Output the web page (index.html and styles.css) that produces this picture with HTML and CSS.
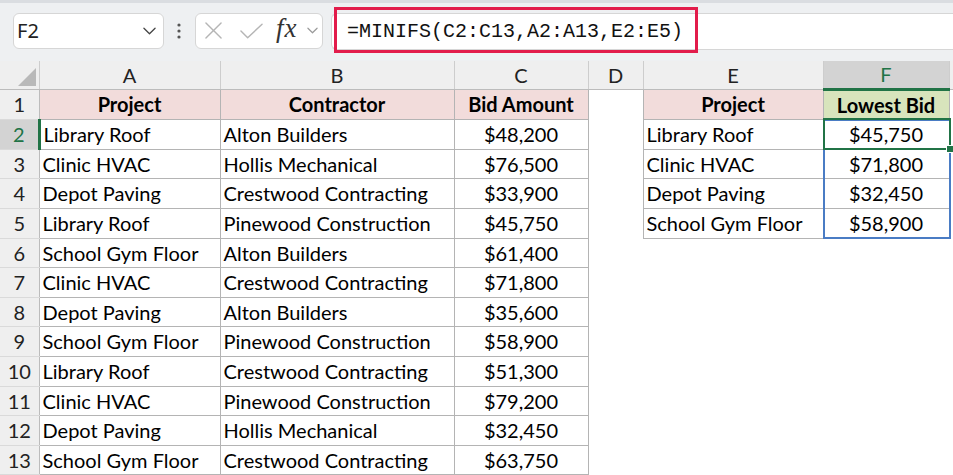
FILE: index.html
```html
<!DOCTYPE html>
<html lang="en">
<head>
  <meta charset="UTF-8" />
  <title>MINIFS – Lowest Bid</title>
  <link rel="stylesheet" href="styles.css">
</head>
<body>
  <div class="toolbar">
    <div class="namebox">
      <span>F2</span>
      <svg viewBox="0 0 14 8" fill="none" stroke="#444" stroke-width="1.4" stroke-linecap="round" stroke-linejoin="round">
        <polyline points="1 1 7 7 13 1"></polyline>
      </svg>
    </div>
    <svg class="grip" viewBox="0 0 4 16" fill="#555">
      <circle cx="2" cy="2" r="1.6"></circle>
      <circle cx="2" cy="8" r="1.6"></circle>
      <circle cx="2" cy="14" r="1.6"></circle>
    </svg>
    <div class="fx-tools">
      <svg class="tool-x" viewBox="0 0 18 18" fill="none" stroke="#b5b5b5" stroke-width="1.5" stroke-linecap="round">
        <line x1="1" y1="1" x2="17" y2="17"></line>
        <line x1="17" y1="1" x2="1" y2="17"></line>
      </svg>
      <svg class="tool-check" viewBox="0 0 24 16" fill="none" stroke="#b5b5b5" stroke-width="1.5" stroke-linecap="round" stroke-linejoin="round">
        <polyline points="1 8 8 15 23 1"></polyline>
      </svg>
      <span class="fx">fx</span>
      <svg class="tool-chevron" viewBox="0 0 12 7" fill="none" stroke="#9a9a9a" stroke-width="1.3" stroke-linecap="round" stroke-linejoin="round">
        <polyline points="1 1 6 6 11 1"></polyline>
      </svg>
    </div>
    <div class="formula">
      <span class="formula-text">=MINIFS(C2:C13,A2:A13,E2:E5)</span>
      <div class="callout"></div>
    </div>
  </div>

  <table class="sheet">
    <colgroup>
      <col class="w-head"><col class="w-a"><col class="w-b"><col class="w-c">
      <col class="w-d"><col class="w-e"><col class="w-f"><col class="w-g">
    </colgroup>
    <thead>
      <tr class="col-heads">
        <th class="corner"><div class="corner-tri"></div></th>
        <th>A</th><th>B</th><th>C</th><th>D</th><th>E</th>
        <th class="active-col">F</th><th class="last"></th>
      </tr>
    </thead>
    <tbody>
      <tr class="r30">
        <th class="rh">1</th>
        <td class="hd">Project</td><td class="hd">Contractor</td><td class="hd">Bid Amount</td>
        <td></td>
        <td class="hd">Project</td><td class="hd green">Lowest Bid</td><td></td>
      </tr>
      <tr class="r30">
        <th class="rh active-row">2</th>
        <td class="tx">Library Roof</td><td class="tx">Alton Builders</td><td class="num">$48,200</td>
        <td></td>
        <td class="tx">Library Roof</td>
        <td class="num anchor">
          <div class="spill-range"></div>
          <div class="active-cell"><span class="handle"></span></div>
          $45,750
        </td><td></td>
      </tr>
      <tr class="r29">
        <th class="rh">3</th>
        <td class="tx">Clinic HVAC</td><td class="tx">Hollis Mechanical</td><td class="num">$76,500</td>
        <td></td>
        <td class="tx">Clinic HVAC</td><td class="num">$71,800</td><td></td>
      </tr>
      <tr class="r30">
        <th class="rh">4</th>
        <td class="tx">Depot Paving</td><td class="tx">Crestwood Contracting</td><td class="num">$33,900</td>
        <td></td>
        <td class="tx">Depot Paving</td><td class="num">$32,450</td><td></td>
      </tr>
      <tr class="r30">
        <th class="rh">5</th>
        <td class="tx">Library Roof</td><td class="tx">Pinewood Construction</td><td class="num">$45,750</td>
        <td></td>
        <td class="tx">School Gym Floor</td><td class="num">$58,900</td><td></td>
      </tr>
      <tr class="r29">
        <th class="rh">6</th>
        <td class="tx">School Gym Floor</td><td class="tx">Alton Builders</td><td class="num">$61,400</td>
        <td></td><td></td><td></td><td></td>
      </tr>
      <tr class="r30">
        <th class="rh">7</th>
        <td class="tx">Clinic HVAC</td><td class="tx">Crestwood Contracting</td><td class="num">$71,800</td>
        <td></td><td></td><td></td><td></td>
      </tr>
      <tr class="r29">
        <th class="rh">8</th>
        <td class="tx">Depot Paving</td><td class="tx">Alton Builders</td><td class="num">$35,600</td>
        <td></td><td></td><td></td><td></td>
      </tr>
      <tr class="r30">
        <th class="rh">9</th>
        <td class="tx">School Gym Floor</td><td class="tx">Pinewood Construction</td><td class="num">$58,900</td>
        <td></td><td></td><td></td><td></td>
      </tr>
      <tr class="r30">
        <th class="rh">10</th>
        <td class="tx">Library Roof</td><td class="tx">Crestwood Contracting</td><td class="num">$51,300</td>
        <td></td><td></td><td></td><td></td>
      </tr>
      <tr class="r29">
        <th class="rh">11</th>
        <td class="tx">Clinic HVAC</td><td class="tx">Pinewood Construction</td><td class="num">$79,200</td>
        <td></td><td></td><td></td><td></td>
      </tr>
      <tr class="r30">
        <th class="rh">12</th>
        <td class="tx">Depot Paving</td><td class="tx">Hollis Mechanical</td><td class="num">$32,450</td>
        <td></td><td></td><td></td><td></td>
      </tr>
      <tr class="r29">
        <th class="rh">13</th>
        <td class="tx">School Gym Floor</td><td class="tx">Crestwood Contracting</td><td class="num">$63,750</td>
        <td></td><td></td><td></td><td></td>
      </tr>
    </tbody>
  </table>
</body>
</html>
```

FILE: styles.css
```css
:root {
  --toolbar-bg: #eef0f2;
  --head-bg: #efefef;
  --head-active: #d3d3d3;
  --excel-green: #217346;
  --cell-border: #b4b4b4;
  --head-line: #cdcdcd;
  --callout: #e21c4b;
  --spill: #4a7cc4;
}

body {
  margin: 0;
  width: 953px;
  height: 475px;
  overflow: hidden;
  background: #ffffff;
  font-family: Lato, "Liberation Sans", sans-serif;
  color: #000;
}

/* Formula bar */
.toolbar {
  height: 61px;
  box-sizing: border-box;
  background: var(--toolbar-bg);
  border-top: 3px solid #dadde1;
  display: flex;
  align-items: center;
  padding-left: 13px;
}

.namebox {
  width: 151px;
  height: 36px;
  box-sizing: border-box;
  background: #fff;
  border: 1px solid #d6d6d6;
  border-radius: 6px;
  display: flex;
  align-items: center;
  justify-content: space-between;
  padding: 0 7px 0 3px;
  font-family: "Noto Sans", sans-serif;
  font-size: 20px;
  color: #222;
  margin-top: -3px;
}

.namebox svg {
  width: 13px;
  height: 8px;
}

.grip {
  width: 4px;
  height: 16px;
  margin: -3px 14px 0 13px;
}

.fx-tools {
  width: 128px;
  height: 36px;
  box-sizing: border-box;
  background: #fff;
  border: 1px solid #d6d6d6;
  border-radius: 6px;
  display: flex;
  align-items: center;
  padding-left: 9px;
  margin-top: -3px;
}

.tool-x {
  width: 17px;
  height: 17px;
}

.tool-check {
  width: 23px;
  height: 16px;
  margin-left: 18px;
}

.fx {
  font-family: "Liberation Serif", serif;
  font-style: italic;
  font-size: 27px;
  color: #333;
  margin-left: 13px;
  line-height: 1;
  padding-bottom: 4px;
  letter-spacing: 1px;
}

.tool-chevron {
  width: 11px;
  height: 7px;
  margin-left: 9px;
}

.formula {
  position: relative;
  flex: 1;
  height: 37px;
  margin-left: 8px;
  margin-top: -2px;
  box-sizing: border-box;
  background: #fff;
  border: 1px solid #d6d6d6;
  border-right: none;
  border-radius: 6px 0 0 6px;
  display: flex;
  align-items: center;
}

.formula-text {
  font-family: "Liberation Mono", monospace;
  font-size: 20px;
  color: #111;
  padding-left: 15px;
}

.callout {
  position: absolute;
  left: 2px;
  top: -7px;
  width: 364px;
  height: 46px;
  box-sizing: border-box;
  border: 3px solid var(--callout);
}

/* Grid */
.sheet {
  border-collapse: collapse;
  table-layout: fixed;
  width: 953px;
}

.w-head { width: 39px; }
.w-a { width: 181px; }
.w-b { width: 234px; }
.w-c { width: 134px; }
.w-d { width: 55px; }
.w-e { width: 180px; }
.w-f { width: 126px; }
.w-g { width: 4px; }

.col-heads {
  height: 28px;
}

.col-heads th {
  padding: 0;
  background: var(--head-bg);
  border-left: 1px solid var(--head-line);
  border-bottom: 1px solid #bcbcbc;
  font-weight: normal;
  font-size: 20px;
  line-height: 22px;
  color: #222;
}

.col-heads .corner {
  position: relative;
  border-left: none;
}

.corner-tri {
  position: absolute;
  right: 3px;
  bottom: 3px;
  width: 0;
  height: 0;
  border-left: 18px solid transparent;
  border-bottom: 18px solid #b9b9b9;
}

.col-heads .active-col {
  background: var(--head-active);
  color: var(--excel-green);
  border-bottom: 3px solid var(--excel-green);
}

.r30 { height: 30px; }
.r29 { height: 29px; }

.rh {
  padding: 0;
  background: var(--head-bg);
  border-right: 1px solid #bcbcbc;
  border-bottom: 1px solid #dadada;
  font-weight: normal;
  font-size: 20px;
  line-height: 22px;
  color: #222;
  text-align: center;
}

.rh.active-row {
  background: var(--head-active);
  color: var(--excel-green);
  border-right: 3px solid var(--excel-green);
}

td {
  padding: 0 3px;
  font-size: 20px;
  line-height: 22px;
  white-space: nowrap;
  overflow: hidden;
}

.hd,
.tx,
.num {
  border: 1px solid var(--cell-border);
}

.hd {
  background: #f2dcdb;
  font-weight: bold;
  text-align: center;
}

.hd.green {
  background: #d8e4bc;
}

.num {
  text-align: center;
}

/* F2 holds the spill outline and the active-cell frame */
.anchor {
  position: relative;
  overflow: visible;
}

.spill-range {
  position: absolute;
  left: -1px;
  top: -1px;
  right: -2px;
  height: 120px;
  box-sizing: border-box;
  border: 2px solid var(--spill);
}

.active-cell {
  position: absolute;
  left: -1px;
  top: -2px;
  right: -2px;
  bottom: -1px;
  border: 2px solid var(--excel-green);
}

.handle {
  position: absolute;
  right: -5px;
  bottom: -5px;
  width: 6px;
  height: 6px;
  background: var(--excel-green);
  border: 1px solid #fff;
}
```
